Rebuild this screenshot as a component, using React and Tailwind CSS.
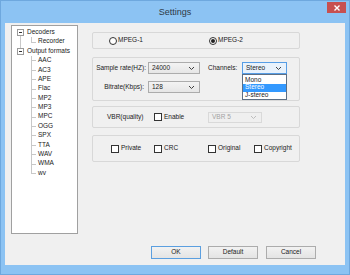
import React from 'react';

const formats = ['AAC', 'AC3', 'APE', 'Flac', 'MP2', 'MP3', 'MPC', 'OGG', 'SPX', 'TTA', 'WAV', 'WMA', 'wv'];

function Chevron({ color = '#404040' }) {
  return (
    <svg width="7" height="5" viewBox="0 0 7 5" className="shrink-0">
      <path d="M1 1 L3.5 3.5 L6 1" fill="none" stroke={color} strokeWidth="1" />
    </svg>
  );
}

function Combo({ value, width, open = false, disabled = false }) {
  const cls = disabled
    ? 'border-[#d9d9d9] bg-[#efefef] text-[#a3a3a3]'
    : open
    ? 'border-[#569de5] bg-[#e8f2fc] text-[#1a1a1a]'
    : 'border-[#acacac] bg-gradient-to-b from-[#f3f3f3] to-[#e6e6e6] text-[#1a1a1a]';
  return (
    <div className={`flex items-center justify-between h-full pl-[3px] pr-[4px] border ${cls}`} style={{ width }}>
      <span className="leading-none">{value}</span>
      <Chevron color={disabled ? '#bdbdbd' : '#404040'} />
    </div>
  );
}

function Checkbox({ label }) {
  return (
    <div className="flex items-center">
      <span className="w-[8px] h-[8px] border border-[#333] bg-white shrink-0" />
      <span className="ml-[2px] leading-none">{label}</span>
    </div>
  );
}

function Radio({ label, checked }) {
  return (
    <div className="flex items-center">
      <span className="w-[8px] h-[8px] rounded-full border border-[#333] bg-white flex items-center justify-center shrink-0">
        {checked && <span className="w-[4px] h-[4px] rounded-full bg-[#222]" />}
      </span>
      <span className="ml-[1px] leading-none">{label}</span>
    </div>
  );
}

function Expander() {
  return (
    <span className="absolute left-[5px] top-[1.5px] w-[7px] h-[7px] border border-[#9a9a9a] bg-white flex items-center justify-center z-10">
      <span className="w-[3px] h-px bg-[#333]" />
    </span>
  );
}

function Tree() {
  return (
    <div className="w-[67px] h-[209px] border border-[#a0a0a0] bg-white pt-[1.5px] text-[6.5px] text-[#1a1a1a]">
      {/* Decoders */}
      <div className="relative h-[9.4px] flex items-center pl-[15px]">
        <span className="absolute left-[8px] top-1/2 bottom-0 w-px bg-[#c8c8c8]" />
        <Expander />
        <span className="leading-none">Decoders</span>
      </div>
      <div className="relative h-[9.4px] flex items-center pl-[26px]">
        <span className="absolute left-[8px] top-0 bottom-0 w-px bg-[#c8c8c8]" />
        <span className="absolute left-[19px] top-0 h-1/2 w-px bg-[#c8c8c8]" />
        <span className="absolute left-[19px] top-1/2 w-[5px] h-px bg-[#c8c8c8]" />
        <span className="leading-none">Recorder</span>
      </div>
      {/* Output formats */}
      <div className="relative h-[9.4px] flex items-center pl-[15px]">
        <span className="absolute left-[8px] top-0 h-1/2 w-px bg-[#c8c8c8]" />
        <Expander />
        <span className="leading-none">Output formats</span>
      </div>
      {formats.map((f, i) => (
        <div key={f} className="relative h-[9.4px] flex items-center pl-[26px]">
          <span className={`absolute left-[19px] top-0 w-px bg-[#c8c8c8] ${i === formats.length - 1 ? 'h-1/2' : 'h-full'}`} />
          <span className="absolute left-[19px] top-1/2 w-[5px] h-px bg-[#c8c8c8]" />
          <span className="leading-none">{f}</span>
        </div>
      ))}
    </div>
  );
}

function Button({ label, primary, className = '' }) {
  return (
    <div
      className={`w-[50px] h-[13px] flex items-center justify-center border bg-gradient-to-b from-[#f2f2f2] to-[#e4e4e4] leading-none ${
        primary ? 'border-[#5b9fe0]' : 'border-[#acacac]'
      } ${className}`}
    >
      {label}
    </div>
  );
}

export default function App() {
  return (
    <div className="w-[350px] h-[275px] bg-[#8cc3f3] border border-[#6ea8de] flex flex-col font-['Liberation_Sans',Arial,sans-serif] text-[#1a1a1a] overflow-hidden">
      {/* Title bar */}
      <div className="relative h-[22px] shrink-0 flex items-center justify-center">
        <span className="text-[9px] text-[#2e3a46] leading-none">Settings</span>
        <div className="absolute right-[3px] top-[1px] w-[19px] h-[11px] bg-[#c75050] flex items-center justify-center">
          <svg width="6" height="6" viewBox="0 0 6 6">
            <path d="M0.5 0.5 L5.5 5.5 M5.5 0.5 L0.5 5.5" stroke="#fff" strokeWidth="1.4" />
          </svg>
        </div>
      </div>

      {/* Client */}
      <div className="mx-[4px] h-[242px] shrink-0 bg-[#f0f0f0] flex flex-col pl-[6px] pt-[2px] text-[6.5px]">
        <div className="flex">
          <Tree />

          <div className="ml-[14px] w-[208px] flex flex-col pt-[7px]">
            {/* MPEG version */}
            <div className="h-[17px] border border-[#d8d8d8] rounded-[2px] flex items-center pl-[16px]">
              <div className="w-[100px]">
                <Radio label="MPEG-1" />
              </div>
              <Radio label="MPEG-2" checked />
            </div>

            {/* Sample rate / channels / bitrate */}
            <div className="mt-[8px] h-[44px] border border-[#d8d8d8] rounded-[2px] pt-[4px]">
              <div className="flex items-center h-[12px]">
                <span className="w-[53px] text-right leading-none">Sample rate(HZ):</span>
                <div className="ml-[2px] h-full">
                  <Combo value="24000" width={52} />
                </div>
                <span className="ml-[8px] w-[34px] leading-none">Channels:</span>
                <div className="relative h-full">
                  <Combo value="Stereo" width={45} open />
                  <div className="absolute left-0 top-[12px] w-[45px] h-[26px] border border-[#5d6f84] bg-white z-10 flex flex-col pt-[1px]">
                    <span className="h-[8px] pl-[2px] flex items-center leading-none">Mono</span>
                    <span className="h-[8.5px] pl-[2px] flex items-center leading-none bg-[#3399ff] text-white">Stereo</span>
                    <span className="h-[8px] pl-[2px] flex items-center leading-none">J-stereo</span>
                  </div>
                </div>
              </div>
              <div className="flex items-center h-[12px] mt-[7px]">
                <span className="w-[51px] text-right leading-none">Bitrate(Kbps):</span>
                <div className="ml-[4px] h-full">
                  <Combo value="128" width={52} />
                </div>
              </div>
            </div>

            {/* VBR */}
            <div className="mt-[5px] h-[22px] border border-[#d8d8d8] rounded-[2px] flex items-center pl-[14px]">
              <span className="w-[47px] leading-none">VBR(quality)</span>
              <div className="w-[54px]">
                <Checkbox label="Enable" />
              </div>
              <div className="h-[11px]">
                <Combo value="VBR 5" width={54} disabled />
              </div>
            </div>

            {/* Flags */}
            <div className="mt-[7px] h-[27px] border border-[#d8d8d8] rounded-[2px] flex items-center pl-[18px]">
              <div className="w-[43px]">
                <Checkbox label="Private" />
              </div>
              <div className="w-[54px]">
                <Checkbox label="CRC" />
              </div>
              <div className="w-[46px]">
                <Checkbox label="Original" />
              </div>
              <Checkbox label="Copyright" />
            </div>
          </div>
        </div>

        {/* Buttons */}
        <div className="mt-[12px] flex justify-end mr-[29px]">
          <Button label="OK" primary />
          <Button label="Default" className="ml-[7px]" />
          <Button label="Cancel" className="ml-[8px]" />
        </div>
      </div>
    </div>
  );
}
